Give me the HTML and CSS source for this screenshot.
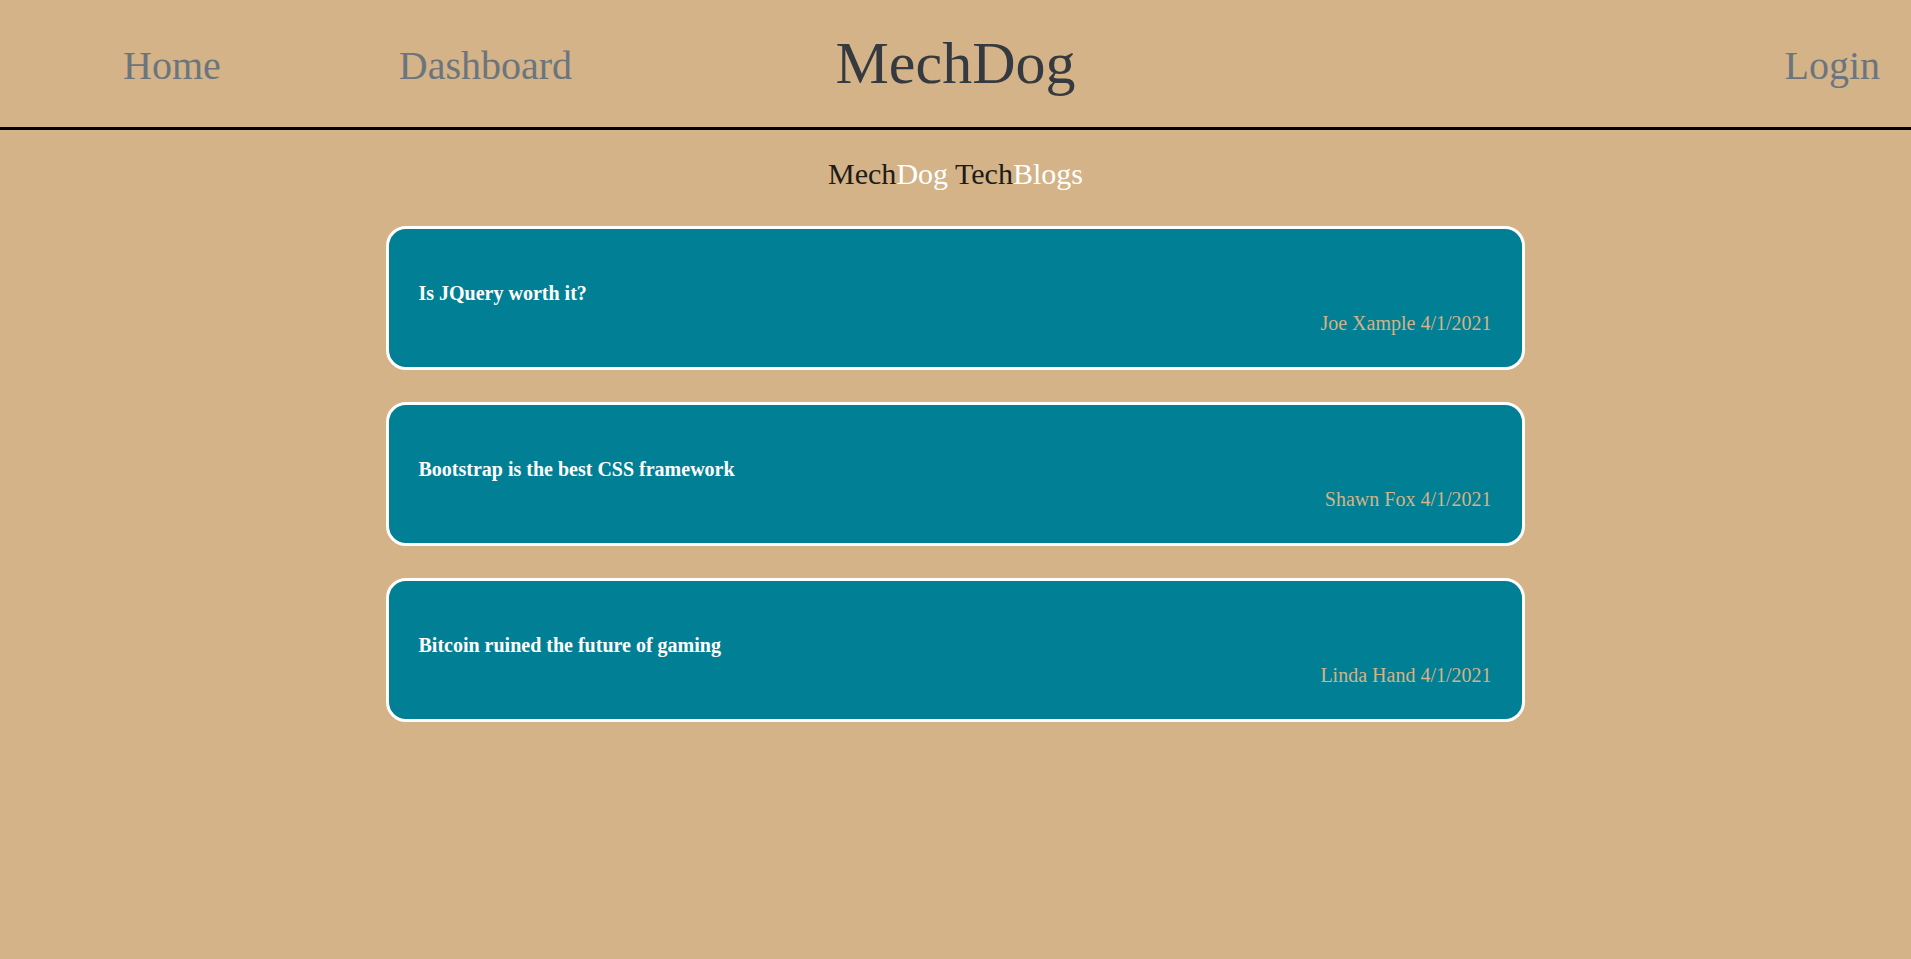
FILE: index.html
```html
<!DOCTYPE html>
<html lang="en">
<head>
<meta charset="utf-8">
<title>MechDog</title>
<link rel="stylesheet" href="styles.css">
</head>
<body>
<header class="site-header">
  <nav class="nav-left">
    <a class="nav-link" href="#">Home</a>
    <a class="nav-link" href="#">Dashboard</a>
  </nav>
  <h1 class="brand">MechDog</h1>
  <nav class="nav-right">
    <a class="nav-link" href="#">Login</a>
  </nav>
</header>
<main class="content">
  <h2 class="subtitle"><span class="dark">Mech</span><span class="light">Dog</span> <span class="dark">Tech</span><span class="light">Blogs</span></h2>
  <section class="posts">
    <article class="post">
      <h3 class="post-title">Is JQuery worth it?</h3>
      <p class="post-meta">Joe Xample 4/1/2021</p>
    </article>
    <article class="post">
      <h3 class="post-title">Bootstrap is the best CSS framework</h3>
      <p class="post-meta">Shawn Fox 4/1/2021</p>
    </article>
    <article class="post">
      <h3 class="post-title">Bitcoin ruined the future of gaming</h3>
      <p class="post-meta">Linda Hand 4/1/2021</p>
    </article>
  </section>
</main>
</body>
</html>
```
FILE: styles.css
```css
html, body {
  margin: 0;
  padding: 0;
}
body {
  background: #d3b387;
  font-family: "Liberation Serif", "Times New Roman", serif;
  min-height: 100vh;
}
.site-header {
  display: grid;
  grid-template-columns: 1fr auto 1fr;
  align-items: center;
  height: 127px;
  border-bottom: 3px solid #000;
}
.nav-left {
  display: flex;
  align-items: center;
  gap: 178px;
  padding-left: 123px;
  padding-top: 4px;
}
.nav-right {
  display: flex;
  justify-content: flex-end;
  padding-right: 31px;
  padding-top: 4px;
}
.nav-link {
  color: #6c757d;
  font-size: 40px;
  text-decoration: none;
  line-height: normal;
}
.brand {
  margin: 0;
  font-size: 60px;
  font-weight: normal;
  color: #343a40;
  line-height: normal;
}
.content {
  padding-top: 27px;
}
.subtitle {
  margin: 0 0 35px;
  text-align: center;
  font-size: 30px;
  font-weight: normal;
  line-height: normal;
}
.subtitle .dark {
  color: #1e1b18;
}
.subtitle .light {
  color: #ffffff;
}
.posts {
  width: 1139px;
  margin-left: calc(50% - 570px);
  display: flex;
  flex-direction: column;
  gap: 32px;
}
.post {
  background: #017f94;
  border: 3px solid #ffffff;
  border-radius: 20px;
  padding: 29px 30px;
  line-height: 1.5;
}
.post-title {
  margin: 20px 0 0;
  font-size: 20px;
  font-weight: bold;
  color: #ffffff;
  line-height: 1.5;
}
.post-meta {
  margin: 0;
  font-size: 20px;
  color: #d3b387;
  text-align: right;
  line-height: 1.5;
}
```
